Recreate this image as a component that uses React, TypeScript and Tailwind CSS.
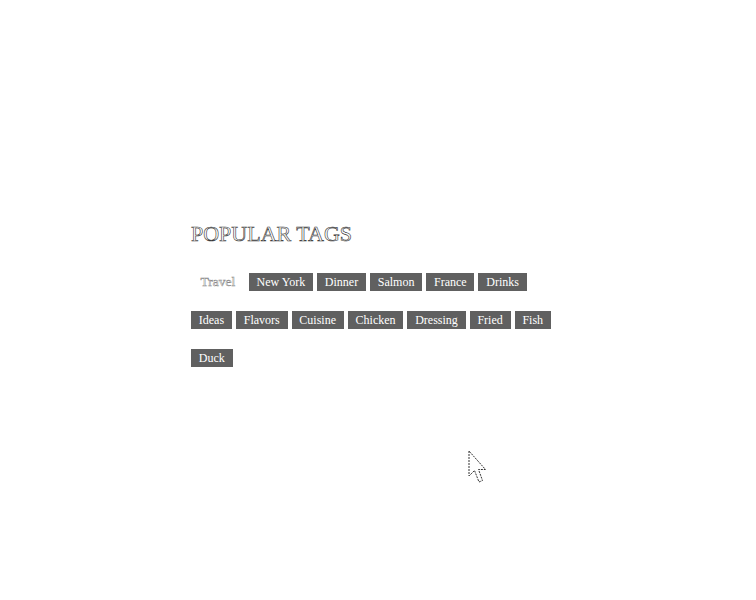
import React from "react";

const row = ["Travel","New York","Dinner","Salmon","France","Drinks","Ideas","Flavors","Cuisine","Chicken","Dressing","Fried","Fish","Duck"];

export default function App() {
  return (
    <div className="relative w-[756px] h-[600px] bg-white" style={{ fontFamily: '"Liberation Serif", "Times New Roman", serif' }}>
      <div className="pt-[220px] pl-[191px]">
        <h2 className="text-[22px] leading-[28px] text-white [-webkit-text-stroke:0.6px_#333]">POPULAR TAGS</h2>
        <div className="mt-[25px] w-[370px] flex flex-wrap gap-x-[4px] gap-y-[20px]">
          {row.map((t, i) => (
            <span
              key={t}
              className={
                i === 0
                  ? "h-[18px] px-[9.5px] flex items-center text-[13.5px] text-white bg-white [-webkit-text-stroke:0.5px_#888]"
                  : "h-[18px] px-[7.8px] flex items-center text-[12px] text-white bg-[#606060]"
              }
            >
              {t}
            </span>
          ))}
        </div>
      </div>
      <svg className="absolute left-[468px] top-[450px]" width="20" height="36" viewBox="0 0 20 36">
        <path d="M1 1 L1 26 L6.5 20.5 L11 32 L14.5 30.5 L10.5 19.5 L17.5 19.5 Z" fill="white" stroke="#333" strokeWidth="1" strokeDasharray="2 1" />
      </svg>
    </div>
  );
}
